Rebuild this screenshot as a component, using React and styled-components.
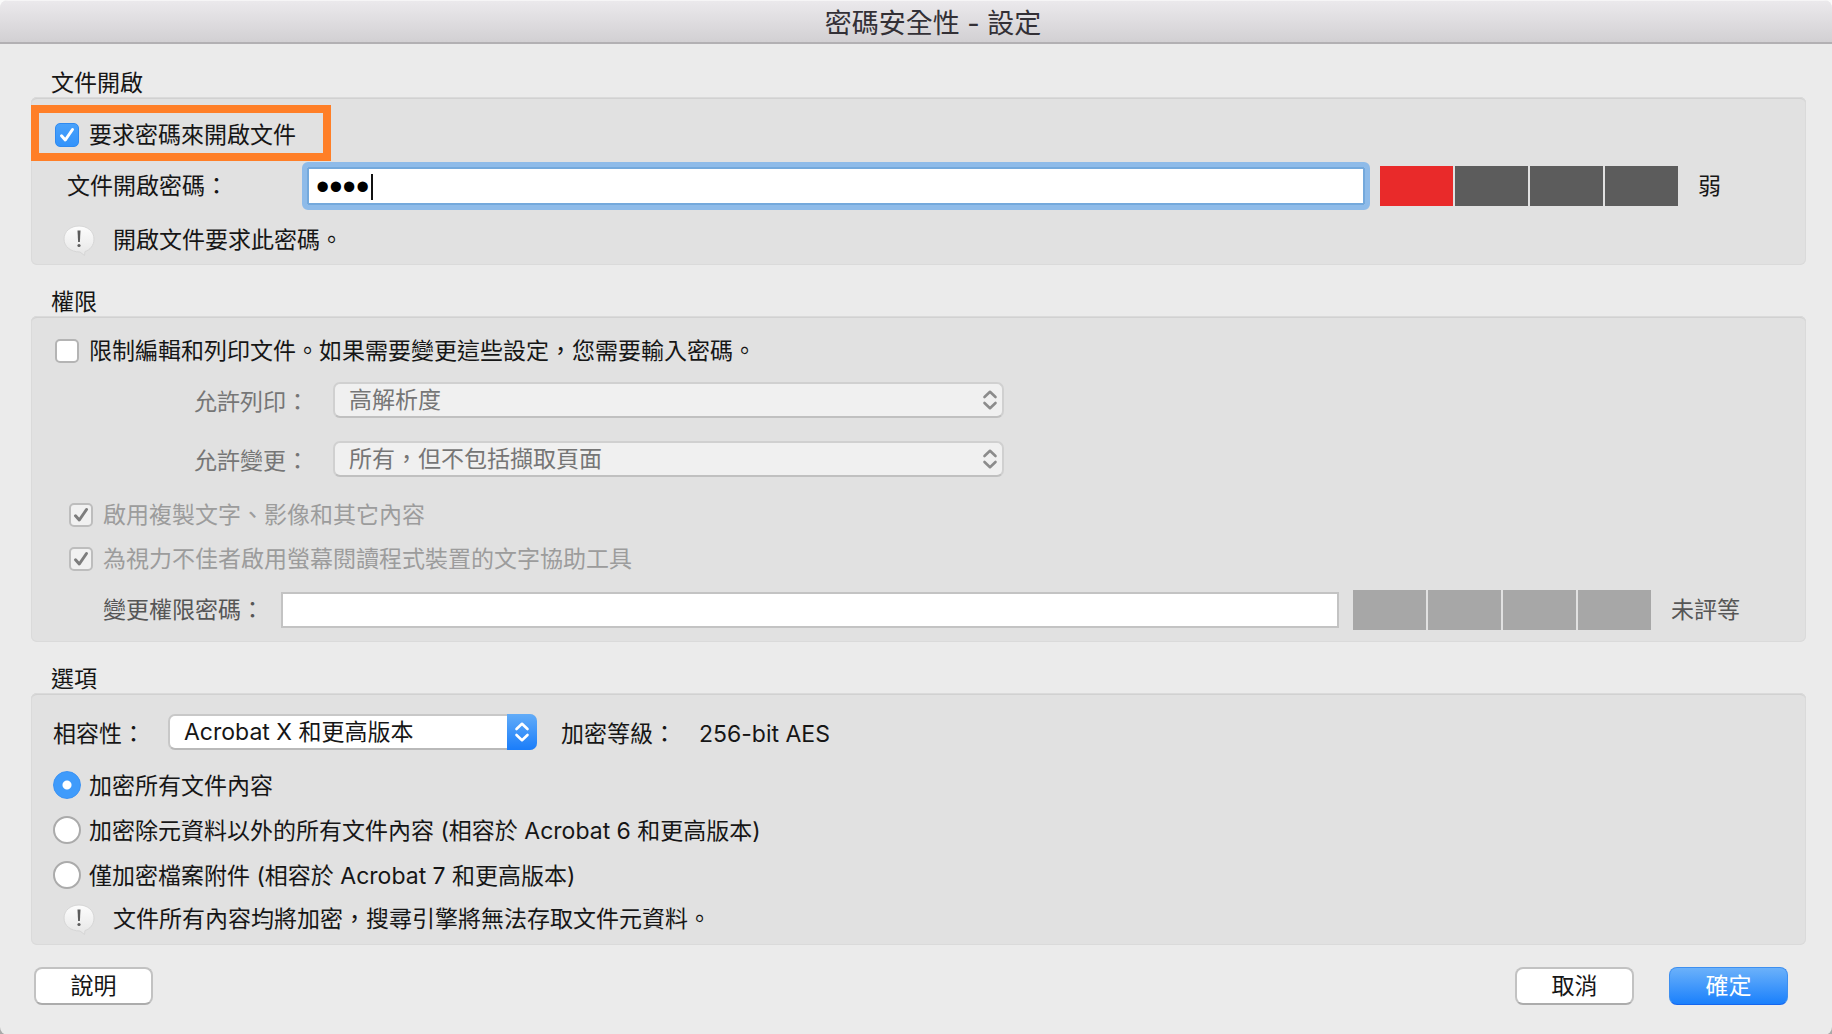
import React, { useState } from "react";
import styled, { createGlobalStyle, css } from "styled-components";

const GlobalStyle = createGlobalStyle`
  * { box-sizing: border-box; }
  html { background: linear-gradient(#fafafa 50%, #a9a9a9 50%); }
  body { margin: 0; }
  body, input, select, button {
    font-family: Inter, "Noto Sans CJK TC", sans-serif;
    font-size: 23px;
    line-height: 30px;
  }
`;

const tones = { strong: "#161616", medium: "#565656", soft: "#767676", faint: "#9c9c9c" };

const Dialog = styled.form`
  display: flex;
  flex-direction: column;
  min-height: 100vh;
  background: #ebebeb;
  border-radius: 8px;
  overflow: hidden;
  color: ${tones.strong};
`;

const TitleBar = styled.header`
  height: 44px;
  display: flex;
  align-items: center;
  justify-content: center;
  padding: 4px 0 0 34px;
  background: linear-gradient(#ebe9ec, #d2d0d3);
  border-top: 1px solid #f6f5f6;
  border-bottom: 2px solid #b2b0b3;
`;

const Title = styled.h1`
  margin: 0;
  font-size: 27px;
  line-height: 36px;
  font-weight: 400;
  color: #333036;
`;

const Body = styled.main`
  display: flex;
  flex-direction: column;
  gap: 21px;
  padding: 23px 26px 0 31px;
`;

const Group = styled.fieldset`
  border: 0;
  margin: 0;
  padding: 0;
  min-width: 0;
`;

const GroupName = styled.legend`
  padding: 2px 20px 0;
  line-height: 28px;
`;

const Panel = styled.div`
  display: flex;
  flex-direction: column;
  padding: ${(p) => p.$pad};
  background: #e1e1e1;
  border-radius: 6px;
  box-shadow: inset 0 0 0 1px #dadada, inset 0 2px 0 #d1d1d1;
`;

const Row = styled.div`
  display: flex;
  align-items: center;
  height: ${(p) => p.$h}px;
  padding-top: ${(p) => p.$top || 0}px;
  padding-left: ${(p) => p.$indent}px;
  padding-right: ${(p) => p.$end || 0}px;
  color: ${(p) => tones[p.$tone || "strong"]};
`;

const Highlight = styled(Row)`
  align-self: flex-start;
  border: 8px solid #ff7f27;
  width: 300px;
`;

const Modes = styled.div`
  padding-top: 3px;
`;

const Choice = styled.label`
  display: flex;
  align-items: center;
  gap: ${(p) => p.$gap}px;
  white-space: nowrap;
`;

const ChoiceText = styled.span`
  padding-top: 2px;
`;

const CheckBox = styled.span`
  display: grid;
  width: 24px;
  height: 24px;
  & > * { grid-area: 1 / 1; }
  svg { width: 24px; height: 24px; pointer-events: none; position: relative; }
`;

const CheckInput = styled.input`
  appearance: none;
  margin: 0;
  width: 24px;
  height: 24px;
  border-radius: 5px;
  border: 2px solid #b4b4b4;
  background: #fff;
  &:checked { border: 1px solid #2f8af0; background: linear-gradient(#4aa2fb, #3393fb); }
  &:disabled { border: 2px solid #bdbdbd; background: #f1f1f1; }
`;

const RadioInput = styled.input`
  appearance: none;
  margin: 0;
  width: 28px;
  height: 28px;
  border-radius: 50%;
  border: 2px solid #ababab;
  background: #fff;
  &:checked {
    border: 1px solid #3a92f4;
    background: radial-gradient(circle, #fff 4px, #3f9bfb 5px);
  }
`;

const FieldLabel = styled.label`
  flex: none;
  width: ${(p) => p.$w}px;
  padding-top: ${(p) => (p.$low ? 4 : 0)}px;
  white-space: nowrap;
`;

const Secret = styled.span`
  position: relative;
  display: flex;
  flex: 1;
  min-width: 0;
`;

const Caret = styled.span`
  position: absolute;
  left: 69px;
  top: 12px;
  width: 2px;
  height: 26px;
  background: #111;
`;

const SecretInput = styled.input`
  flex: 1;
  min-width: 0;
  height: 36px;
  padding: 0 8px;
  border: 2px solid #c3c3c3;
  border-radius: 0;
  background: #fff;
  color: #000;
  outline: none;
  ${(p) => p.$active && css`
    height: 48px;
    border: 5px solid #8ebbe9;
    border-radius: 6px;
    box-shadow: inset 0 0 0 2px #74a9dc;
    padding: 2px 9px 0;
    font-family: "Liberation Sans", sans-serif;
    font-size: 38px;
  `}
`;

const Meter = styled.div`
  display: flex;
  flex: none;
  gap: 2px;
  margin-left: ${(p) => p.$gap}px;
  margin-right: 20px;
`;

const MeterCell = styled.span`
  width: 73px;
  height: 40px;
  background: ${(p) => p.$color};
`;

const Rating = styled.span`
  flex: none;
  width: ${(p) => p.$w}px;
  white-space: nowrap;
`;

const SelectBox = styled.span`
  position: relative;
  flex: none;
  display: flex;
  width: ${(p) => p.$w};
  height: 36px;
`;

const SelectInput = styled.select`
  appearance: none;
  width: 100%;
  height: 36px;
  padding: 0 40px 0 14px;
  border: 2px solid #c8c8c8;
  border-bottom-color: #b9b9b9;
  border-radius: 7px;
  background: #fff;
  color: ${tones.strong};
  &:disabled { background: #f0f0f0; color: ${tones.soft}; opacity: 1; border-color: #d0d0d0 #d0d0d0 #c0c0c0; }
`;

const Stepper = styled.span`
  position: absolute;
  top: 0;
  right: 0;
  width: ${(p) => (p.$blue ? 30 : 28)}px;
  height: 36px;
  display: grid;
  place-items: center;
  pointer-events: none;
  border-radius: 0 7px 7px 0;
  color: ${(p) => (p.$blue ? "#fff" : "#8b8b8b")};
  background: ${(p) => (p.$blue ? "linear-gradient(#62acf8, #1a7dfa)" : "none")};
`;

const LevelText = styled.span`
  display: flex;
  gap: 23px;
  margin-left: 24px;
  padding-top: 4px;
`;

const Note = styled.p`
  display: flex;
  align-items: center;
  gap: 18px;
  margin: 0;
  white-space: nowrap;
  svg { flex: none; }
`;

const Footer = styled.footer`
  display: flex;
  align-items: center;
  gap: 35px;
  padding: 22px 44px 30px 34px;
`;

const Spacer = styled.span`
  flex: 1;
`;

const Button = styled.button`
  width: 119px;
  height: 38px;
  padding: 0;
  border-radius: 8px;
  border: 2px solid #c2c2c2;
  border-bottom-color: #acacac;
  background: #fff;
  color: ${tones.strong};
  ${(p) => p.$primary && css`
    border: 1px solid #3d8ff0;
    border-bottom-color: #1566ee;
    background: linear-gradient(#6bb1fa, #1a80fc);
    color: #fff;
  `}
`;

function Check({ id, label, color = "#fff", ...rest }) {
  return (
    <Choice htmlFor={id} $gap={10}>
      <CheckBox>
        <CheckInput id={id} type="checkbox" {...rest} />
        {rest.defaultChecked && (
          <svg viewBox="0 0 24 24" fill="none" stroke={color} strokeWidth="3" strokeLinecap="round" strokeLinejoin="round" aria-hidden="true">
            <path d="M6.5 12.8 10.3 17 17.5 6.5" />
          </svg>
        )}
      </CheckBox>
      {label}
    </Choice>
  );
}

function Arrows({ blue }) {
  return (
    <Stepper $blue={blue}>
      <svg width="16" height="20" viewBox="0 0 16 20" fill="none" stroke="currentColor" strokeWidth="2.6" strokeLinecap="round" strokeLinejoin="round" aria-hidden="true">
        <path d="M2.5 7 8 1.8 13.5 7M2.5 13 8 18.2 13.5 13" />
      </svg>
    </Stepper>
  );
}

function NoteIcon() {
  return (
    <svg width="32" height="32" viewBox="0 0 32 32" aria-hidden="true">
      <defs>
        <linearGradient id="bubble" x1="0" y1="0" x2="0" y2="1">
          <stop offset="0" stopColor="#fdfdfd" />
          <stop offset="1" stopColor="#e6e6e6" />
        </linearGradient>
      </defs>
      <path d="M16 2C24.5 2 31 7.500 31 15 31 21.500 27 26 22 27.500L21.500 31.500 17 28C7.500 28 1 22.500 1 15S7.500 2 16 2Z" fill="url(#bubble)" stroke="#d6d6d6" />
      <path d="M14.500 6.500h3l-.6 11.500h-1.800z" fill="#5c5c5c" />
      <circle cx="16" cy="21.500" r="1.600" fill="#5c5c5c" />
    </svg>
  );
}

const modes = [
  "加密所有文件內容",
  "加密除元資料以外的所有文件內容 (相容於 Acrobat 6 和更高版本)",
  "僅加密檔案附件 (相容於 Acrobat 7 和更高版本)",
];

const weak = ["#e92a2a", "#5c5c5c", "#5c5c5c", "#5c5c5c"];
const unrated = ["#a7a7a7", "#a7a7a7", "#a7a7a7", "#a7a7a7"];

function Strength({ gap, cells, label }) {
  return (
    <Meter $gap={gap} role="img" aria-label={label}>
      {cells.map((color, i) => <MeterCell key={i} $color={color} />)}
    </Meter>
  );
}

export default function App() {
  const [mode, setMode] = useState(0);
  const [secret, setSecret] = useState("1234");
  return (
    <>
      <GlobalStyle />
      <Dialog lang="zh-Hant" onSubmit={(e) => e.preventDefault()}>
        <TitleBar><Title>密碼安全性 - 設定</Title></TitleBar>
        <Body>
          <Group>
            <GroupName>文件開啟</GroupName>
            <Panel $pad="8px 0 0">
              <Highlight $h={56} $indent={16} $top={4}>
                <Check id="require" label="要求密碼來開啟文件" defaultChecked />
              </Highlight>
              <Row $h={50} $indent={36} $end={67}>
                <FieldLabel htmlFor="open-secret" $w={235}>文件開啟密碼：</FieldLabel>
                <Secret>
                  <SecretInput id="open-secret" type="password" autoComplete="off" $active value={secret} onChange={(e) => setSecret(e.target.value)} />
                  <Caret />
                </Secret>
                <Strength gap={10} cells={weak} label="弱" />
                <Rating $w={41}>弱</Rating>
              </Row>
              <Row $h={54} $indent={32} $top={4}><Note><NoteIcon />開啟文件要求此密碼。</Note></Row>
            </Panel>
          </Group>

          <Group>
            <GroupName>權限</GroupName>
            <Panel $pad="16px 0 4px">
              <Row $h={38} $indent={24}>
                <Check id="restrict" label="限制編輯和列印文件。如果需要變更這些設定，您需要輸入密碼。" />
              </Row>
              <Row $h={60} $indent={163} $tone="soft">
                <FieldLabel htmlFor="printing" $w={139} $low>允許列印：</FieldLabel>
                <SelectBox $w="41.6%">
                  <SelectInput id="printing" disabled><option>高解析度</option></SelectInput>
                  <Arrows />
                </SelectBox>
              </Row>
              <Row $h={58} $indent={163} $tone="soft">
                <FieldLabel htmlFor="changes" $w={139} $low>允許變更：</FieldLabel>
                <SelectBox $w="41.6%">
                  <SelectInput id="changes" disabled><option>所有，但不包括擷取頁面</option></SelectInput>
                  <Arrows />
                </SelectBox>
              </Row>
              <Row $h={49} $indent={38} $top={5} $tone="faint">
                <Check id="copying" label="啟用複製文字、影像和其它內容" color="#7d7d7d" defaultChecked disabled />
              </Row>
              <Row $h={44} $indent={38} $tone="faint">
                <Check id="reader" label="為視力不佳者啟用螢幕閱讀程式裝置的文字協助工具" color="#7d7d7d" defaultChecked disabled />
              </Row>
              <Row $h={57} $indent={72} $end={66} $tone="medium">
                <FieldLabel htmlFor="change-secret" $w={178}>變更權限密碼：</FieldLabel>
                <Secret><SecretInput id="change-secret" type="password" autoComplete="off" disabled /></Secret>
                <Strength gap={14} cells={unrated} label="未評等" />
                <Rating $w={69}>未評等</Rating>
              </Row>
            </Panel>
          </Group>

          <Group>
            <GroupName>選項</GroupName>
            <Panel $pad="12px 0 4px">
              <Row $h={54} $indent={22}>
                <FieldLabel htmlFor="compat" $w={115} $low>相容性：</FieldLabel>
                <SelectBox $w="369px">
                  <SelectInput id="compat"><option>Acrobat X 和更高版本</option></SelectInput>
                  <Arrows blue />
                </SelectBox>
                <LevelText><span>加密等級：</span><span>256-bit AES</span></LevelText>
              </Row>
              <Modes>
                {modes.map((text, i) => (
                  <Row key={text} $h={45} $indent={22}>
                    <Choice $gap={8}>
                      <RadioInput type="radio" name="mode" checked={mode === i} onChange={() => setMode(i)} />
                      <ChoiceText>{text}</ChoiceText>
                    </Choice>
                  </Row>
                ))}
              </Modes>
              <Row $h={44} $indent={32}><Note><NoteIcon />文件所有內容均將加密，搜尋引擎將無法存取文件元資料。</Note></Row>
            </Panel>
          </Group>
        </Body>
        <Footer>
          <Button type="button">說明</Button>
          <Spacer />
          <Button type="button">取消</Button>
          <Button type="submit" $primary>確定</Button>
        </Footer>
      </Dialog>
    </>
  );
}
